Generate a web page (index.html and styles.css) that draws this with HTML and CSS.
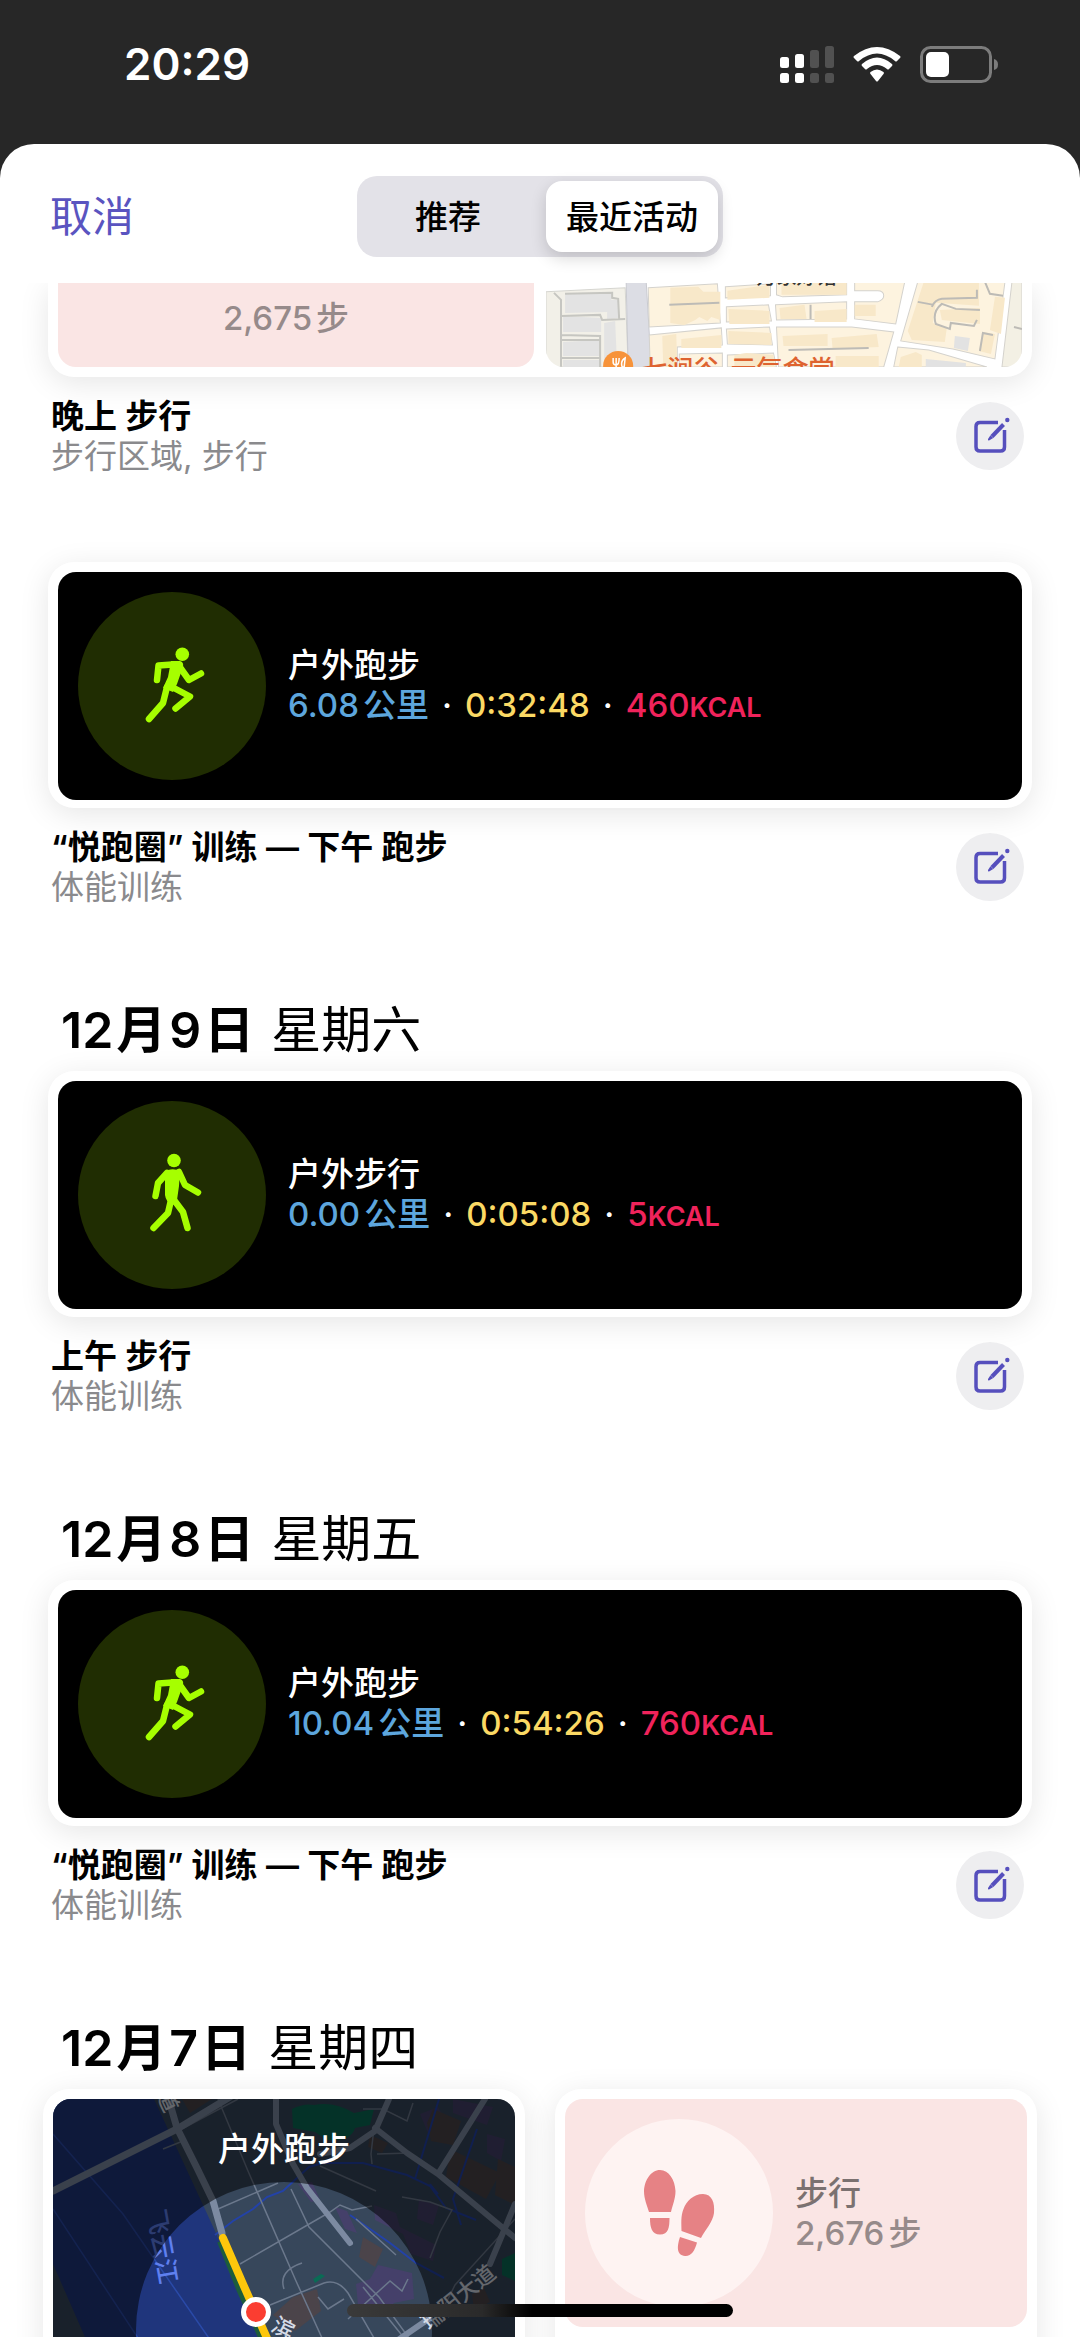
FILE: index.html
```html
<!DOCTYPE html>
<html lang="zh-CN">
<head>
    <meta charset="UTF-8">
    <meta name="viewport" content="width=device-width, initial-scale=1.0">
    <title>最近活动</title>
    <link rel="stylesheet" href="styles.css">
</head>
<body>
    <!-- Shared icons -->
    <svg class="sprite" aria-hidden="true">
        <symbol id="icon-run" viewBox="-3 6 90 120">
            <circle cx="52.3" cy="34.3" r="6.8" fill="#a6ff00"/>
            <path d="M41 41h9q4 1 3 6l-6 17-4 8-10-4 5-11z" fill="#a6ff00"/>
            <path d="M27 60l1.500-14.500 14-1M49 46l10 14 12-6.500M42 67l18 9.500-14.500 12M37 67l-4 16-14 16" fill="none" stroke="#a6ff00" stroke-width="6.500" stroke-linecap="round" stroke-linejoin="round"/>
        </symbol>
        <symbol id="icon-walk" viewBox="-3 6 90 120">
            <circle cx="44" cy="31.500" r="6.800" fill="#a6ff00"/>
            <path d="M38 41q6-2 12 1l-1 15-2 14q-2 4-6 3-5-1-6-8V45z" fill="#a6ff00"/>
            <path d="M37 44l-9 10-2.500 13M49 43l6 13 13 7.500M41 71l-3 13-14.500 15M44 71l9 12 4.500 16" fill="none" stroke="#a6ff00" stroke-width="6.500" stroke-linecap="round" stroke-linejoin="round"/>
        </symbol>
        <symbol id="icon-edit" viewBox="0 0 68 68">
            <path d="M42 20.500H24q-4 0-4 4v20.500q0 4 4 4h20.500q4 0 4-4V28" fill="none" stroke="#564fbd" stroke-width="3.500"/>
            <path d="M47.500 22.500L36 34.500" fill="none" stroke="#564fbd" stroke-width="4"/>
            <path d="M34.500 33.200l2.800 2.700-4.300 2.600q-1.500 0-1-1.500z" fill="#564fbd"/>
            <circle cx="51.300" cy="18" r="2.200" fill="#564fbd"/>
        </symbol>
    </svg>

    <header class="status-bar">
        <time class="clock">20:29</time>
        <div class="status-icons">
            <svg width="56" height="40" viewBox="0 0 56 40" aria-label="信号">
                <g fill="#fff">
                    <rect x="1" y="13" width="9" height="11" rx="2.500"/>
                    <rect x="16" y="10" width="9" height="14" rx="2.500"/>
                    <rect x="1" y="29" width="9" height="10" rx="2.500"/>
                    <rect x="16" y="29" width="9" height="10" rx="2.500"/>
                </g>
                <g fill="#515151">
                    <rect x="31" y="6" width="9" height="18" rx="2.500"/>
                    <rect x="46" y="2" width="9" height="22" rx="2.500"/>
                    <rect x="31" y="29" width="9" height="10" rx="2.500"/>
                    <rect x="46" y="29" width="9" height="10" rx="2.500"/>
                </g>
            </svg>
            <svg width="48" height="40" viewBox="0 0 48 40" aria-label="无线网络">
                <g fill="#fff">
                    <path d="M1 12Q24-6 47 12q1 1 0 2l-3 3q-1 1-2 0Q24 2 6 17q-1 1-2 0l-3-3q-1-1 0-2z"/>
                    <path d="M9 20q15-13 30 0 1 1 0 2l-3 3q-1 1-2 0-10-8-20 0-1 1-2 0l-3-3q-1-1 0-2z"/>
                    <path d="M17.500 28q6.500-5 13 0 1 1 0 2l-5.500 7q-1 1-2 0l-5.500-7q-1-1 0-2z"/>
                </g>
            </svg>
            <svg width="80" height="40" viewBox="0 0 80 40" aria-label="电池">
                <rect x="2.500" y="3.500" width="69" height="34" rx="9" fill="none" stroke="#7c7c7c" stroke-width="3"/>
                <rect x="7" y="8" width="23" height="25" rx="5" fill="#fff"/>
                <path d="M75 15q4 1 4 5.500T75 26z" fill="#7c7c7c"/>
            </svg>
        </div>
    </header>

    <main class="sheet">
        <div class="toolbar">
            <button class="cancel" type="button">取消</button>
            <fieldset class="segmented" aria-label="活动筛选">
                <input type="radio" name="tab" id="tab-recommended">
                <label for="tab-recommended">推荐</label>
                <input type="radio" name="tab" id="tab-recent" checked>
                <label for="tab-recent">最近活动</label>
            </fieldset>
        </div>

        <div class="feed">
            <article class="entry">
                <div class="card card-scrolled">
                    <div class="tile tile-pink tile-steps">
                        <p class="steps">2,675<span class="unit">步</span></p>
                    </div>
                    <div class="tile tile-map">
                        <svg class="map" viewBox="0 0 475 85" preserveAspectRatio="xMidYMax slice" aria-label="地图">
                            <rect width="475" height="85" fill="#fff"/>
                            <path d="M0 10l79-4 3 79H0z" fill="#f2f0e8" stroke="#d5d5d0"/>
                            <g fill="#e3e3e3">
                                <path d="M19 12l46-1v7h7l1 18-12 1V30l-42 1zM17 34l38 2v14H17zM17 60l37-2v16H17zM58 41l11-2 2 46H58zM17 78h38v7H17z"/>
                            </g>
                            <g fill="none" stroke="#c6c6c1" stroke-width="2">
                                <path d="M8 11l7 7v67M15 34l39-1 2 5 23-1M15 53l39 1v31M15 58h39M15 76h38M19 12l47-1v5l6 1 1 20"/>
                            </g>
                            <path d="M80 0h20l5 85H82z" fill="#dcdde4"/>
                            <path d="M80 0l2 85M100 0l5 85" stroke="#c9cad0"/>
                            <g fill="#fdf3df" stroke="#d4d2cd">
                                <path d="M102 6l69-4 3 39-71 4z"/>
                                <path d="M179 5l45-3v12l-45 2zM180 25l42-2 3 16-45 1zM180 47l43-2 3 18-45-1zM181 73l46-2 3 14h-49z"/>
                                <path d="M230 0h70v13l-64 2-6-2zM229 23l71-3v17l-70 1z"/>
                                <path d="M308 0h50l-9 42-41-5V20h23q6-2 6-6 0-5-6-5h-23z"/>
                                <path d="M103 53l72-7 1 17-45 2v20h-27zM133 72l43-1v14h-43z"/>
                                <path d="M230 45h75l42 5-10 35H232z"/>
                                <path d="M371 0h87l-10 77-42-10-52-8z"/>
                                <path d="M351 65l31 3 58 17h-93z"/>
                            </g>
                            <path d="M465 0h10v85h-20z" fill="#f3f0e4" stroke="#d4d2cd"/>
                            <g fill="#f8e8c9">
                                <path d="M124 6l28-1 5 5h17v28l-9-3-4 4-8-4-4 3-11 5-14-2z"/>
                                <path d="M181 9l42-6v13l-42 2zM182 27l41 2v13h-40zM182 49l43 2v12l-43-1zM200 71l27 2 1 12h-40v-12z"/>
                                <path d="M235 0h65v13h-65zM233 26l25-3 2 14h-26zM268 29l32-2v13h-32zM308 23h21v11h-21z"/>
                                <path d="M116 54l14-2 1 33h-14zM135 57l40-4v13h-40z"/>
                                <path d="M236 54l45-2v12h-44zM285 56l45-4 2 13-46 2zM289 74h43v11h-43z"/>
                                <path d="M377 0h55v24l-43-3-3 20 14 5-2 14-33-2-4-9zM393 28l40-2v16l-38-4zM448 15l10 1-4 36-11-4zM436 50l12 2-4 20-12-3zM354 75l15-5 6 3v12h-23z"/>
                            </g>
                            <path d="M123 23l50-2M242 68l80-2M264 23v14M371 20l16 3M385 25q3-7 10-8l35-1V8M433 28l-24-1-14-5q-10 8-6 20l14 5 1-6 23 3 3-6M438 0l5 12 13 2M433 69l3-18 10 2M467 45l8 2" fill="none" stroke="#bdbbb6" stroke-width="2"/>
                            <path d="M408 54l15 2-2 13-14-3zM379 77l40 4v4h-40z" fill="#e2e2e2"/>
                            <text class="map-street" x="210" y="2">万家好馆</text>
                            <circle cx="72" cy="84" r="15" fill="#f7933a"/>
                            <path d="M67 76v4q0 3 3 3v5M70 76v7M73 76q0 7-3 7M79 76q-5 3-3 9h2z" fill="none" stroke="#fff" stroke-width="1.500"/>
                            <text class="map-food" x="95" y="97">七涧谷</text>
                            <text class="map-food" x="184" y="97">元气食堂</text>
                        </svg>
                    </div>
                </div>
                <div class="meta">
                    <div class="meta-text">
                        <h3>晚上 步行</h3>
                        <p>步行区域, 步行</p>
                    </div>
                    <button class="edit" type="button" aria-label="编辑"><svg><use href="#icon-edit"/></svg></button>
                </div>
            </article>

            <article class="entry">
                <div class="card">
                    <div class="tile tile-workout">
                        <span class="badge"><svg><use href="#icon-run"/></svg></span>
                        <div class="tile-text">
                            <p>户外跑步</p>
                            <p class="stats"><span class="distance">6.08<span class="unit">公里</span></span><span>·</span><span class="duration">0:32:48</span><span>·</span><span class="energy">460<small>KCAL</small></span></p>
                        </div>
                    </div>
                </div>
                <div class="meta">
                    <div class="meta-text">
                        <h3>“悦跑圈” 训练 — 下午 跑步</h3>
                        <p>体能训练</p>
                    </div>
                    <button class="edit" type="button" aria-label="编辑"><svg><use href="#icon-edit"/></svg></button>
                </div>
            </article>

            <h2><b>12<span class="han">月</span>9<span class="han">日</span></b> 星期六</h2>
            <article class="entry">
                <div class="card">
                    <div class="tile tile-workout">
                        <span class="badge"><svg><use href="#icon-walk"/></svg></span>
                        <div class="tile-text">
                            <p>户外步行</p>
                            <p class="stats"><span class="distance">0.00<span class="unit">公里</span></span><span>·</span><span class="duration">0:05:08</span><span>·</span><span class="energy">5<small>KCAL</small></span></p>
                        </div>
                    </div>
                </div>
                <div class="meta">
                    <div class="meta-text">
                        <h3>上午 步行</h3>
                        <p>体能训练</p>
                    </div>
                    <button class="edit" type="button" aria-label="编辑"><svg><use href="#icon-edit"/></svg></button>
                </div>
            </article>

            <h2><b>12<span class="han">月</span>8<span class="han">日</span></b> 星期五</h2>
            <article class="entry">
                <div class="card">
                    <div class="tile tile-workout">
                        <span class="badge"><svg><use href="#icon-run"/></svg></span>
                        <div class="tile-text">
                            <p>户外跑步</p>
                            <p class="stats"><span class="distance">10.04<span class="unit">公里</span></span><span>·</span><span class="duration">0:54:26</span><span>·</span><span class="energy">760<small>KCAL</small></span></p>
                        </div>
                    </div>
                </div>
                <div class="meta">
                    <div class="meta-text">
                        <h3>“悦跑圈” 训练 — 下午 跑步</h3>
                        <p>体能训练</p>
                    </div>
                    <button class="edit" type="button" aria-label="编辑"><svg><use href="#icon-edit"/></svg></button>
                </div>
            </article>

            <h2><b>12<span class="han">月</span>7<span class="han">日</span></b> 星期四</h2>
            <div class="pair">
                <div class="card">
                    <div class="tile tile-route">
                        <svg class="map" viewBox="0 0 462 462" preserveAspectRatio="xMidYMin slice" aria-label="路线地图">
                            <rect width="462" height="462" fill="#37475b"/>
                            <path d="M0 0h101l61 132 43 107 90 223H130L0 165z" fill="#1f357c"/>
                            <path d="M0 35l70 80 90 130M0 110l85 129" fill="none" stroke="#2a4aa8" stroke-width="1.500"/>
                            <path d="M239 10q12-6 22-4 20-4 40 8l20-4-4 16-15 3q-4 14-28 12l-12-8-22-4z" fill="#0a6b55"/>
                            <path d="M260 180l8-5 4 2-10 7zM449 160l13-6v28l-13-6z" fill="#0a6b55"/>
                            <g fill="#45406a">
                                <path d="M245 85l14-2 8 18-9 2zM282 108l12 4 10 22-12-4zM321 106l22 8 4 14 36 18-3 16-22-7-8-20-28-14zM303 185l14-5 8-14 34 8 2 26-20 4-10 10-26-8zM367 15l18-7 10 18-20 8zM400 0l40 8-6 18-34-12zM366 100l20 6-6 20-16-6zM434 35l18 5-4 22-14-8z"/>
                            </g>
                            <g fill="#4b444a">
                                <path d="M380 10l28 12-8 24-22-4-4-18zM397 50l50 24-14 26-40-22zM445 60l17 8v38l-20-10zM317 36l18 8-6 10-14-6zM310 138l20 12-8 18-16-10zM240 198l24-8 4 22-26 20-22-16zM129 0h30l-22 14zM419 195l12-6 6 14-16 8z"/>
                            </g>
                            <path d="M162 136l18-14 20-12 14-12 16-6 26-24 14-4h40l44 12 23 11 16 22 30 12M297 116l40 28 26 20 28 15M424 30l-24 70 8 26M386 0l-24 80M377 85l8 10" fill="none" stroke="#2342a8" stroke-width="2"/>
                            <g fill="none" stroke="#6b788c" stroke-width="1.500">
                                <path d="M165 0l30 72 48 110 26 57M125 32l60-32M165 110l60-26M187 165l90-52 10-7 12 5 20-4M238 90l18 38 70 70 30 41M217 206l54-22q14-4 24 10l26 45M231 190q-6-18 18-26M265 198l10 12 16-10M321 29l-3 26 1 10M324 55l33-1M267 67l56 25M310 10h20l24 12 6-18M295 220l42-38 12 10 6-12M349 98l28 5 22 8-12 22-10 26M462 120l-60 66-10 20M303 120l40 36M110 50l20-8M360 250l-50-62"/>
                            </g>
                            <g fill="none" stroke="#7c8aa1" stroke-linecap="round" stroke-linejoin="round">
                                <path d="M0 92l124-62 53-32" stroke-width="7"/>
                                <path d="M117 5l7 24 20 40 16 33 9 32" stroke-width="7"/>
                                <path d="M223 0v25l17 40 14 24 43 55M336 0l-14 32-25 17-30 6" stroke-width="6"/>
                                <path d="M322 29l32 25 31 21 77 64M432 0l-47 75M462 105l-25 60M377 219l-32 22" stroke-width="6"/>
                            </g>
                            <text class="map-river" transform="translate(94 112) rotate(80)">飞云江</text>
                            <text class="map-road" transform="translate(376 232) rotate(-39)">瑞阳大道</text>
                            <text class="map-road" transform="translate(103 -5) rotate(65)">道</text>
                            <path d="M0 0h462v462H0zM231 83a148 148 0 1 0 0 296 148 148 0 1 0 0-296z" fill="#000" fill-opacity=".53" fill-rule="evenodd"/>
                            <text class="map-road map-road-bright" transform="translate(217 231) rotate(28)">滨</text>
                            <path d="M168 142l20 50 60 130" fill="none" stroke="#1c5c3c" stroke-width="8"/>
                            <path d="M170 139l20 46 31 70 30 70" fill="none" stroke="#fdc70c" stroke-width="8" stroke-linecap="round"/>
                            <circle cx="203" cy="213" r="12.500" fill="#fb3d31" stroke="#fff" stroke-width="5"/>
                        </svg>
                        <p class="route-title">户外跑步</p>
                    </div>
                </div>
                <div class="card">
                    <div class="tile tile-pink">
                        <span class="badge badge-steps">
                            <svg class="feet" viewBox="0 0 188 188" aria-hidden="true">
                                <g fill="#e68285">
                                    <path d="M75 51c9 0 15 10 15.500 21 0 8-3 14-4.500 21H64c-2-7-5-13-5-21 .5-11 7-21 16-21z"/>
                                    <path d="M65 99h19.500c0 9-1 16.500-9.500 16.500S65 108 65 99z"/>
                                    <path d="M118 75c9 0 12 9 11 19-1 9-9 17-13 25l-19.500-7c0-7-1-15 2-22 3-8 10-15 19.500-15z"/>
                                    <path d="M95 118l17 5.500c-2 8-6 14-12 13.500-9-1-8-10-5-19z"/>
                                </g>
                            </svg>
                        </span>
                        <div class="tile-text">
                            <p class="step-name">步行</p>
                            <p class="steps">2,676<span class="unit">步</span></p>
                        </div>
                    </div>
                </div>
            </div>
        </div>
    </main>
    <div class="home-indicator"></div>
</body>
</html>
```
FILE: styles.css
```css
/* Reset */
* {
    margin: 0;
    padding: 0;
    box-sizing: border-box;
}

:root {
    --accent: #5a54c0;
    --muted: #8a8a8d;
    --pink: #fae5e4;
}

body {
    display: flex;
    flex-direction: column;
    height: 100vh;
    overflow: hidden;
    background: #272727;
    color: #000;
    font-family: Inter, "Noto Sans CJK SC", sans-serif;
    font-size: 33px;
    line-height: 40px;
}

button {
    border: none;
    background: none;
    font: inherit;
    cursor: pointer;
}

.sprite {
    position: absolute;
    width: 0;
    height: 0;
}

/* Status bar */
.status-bar {
    display: flex;
    flex-shrink: 0;
    justify-content: space-between;
    align-items: center;
    height: 144px;
    padding: 0 81px 16px 124px;
    color: #fff;
}

.clock {
    font-size: 44px;
    font-weight: 600;
}

.status-icons {
    display: flex;
    align-items: center;
    gap: 18px;
}

/* Sheet */
.sheet {
    display: flex;
    flex-direction: column;
    flex: 1;
    min-height: 0;
    background: #fff;
    border-radius: 34px 34px 0 0;
    overflow: hidden;
}

.toolbar {
    display: grid;
    grid-template-columns: 1fr auto 1fr;
    align-items: center;
    flex-shrink: 0;
    padding: 32px 50px 26px;
}

.cancel {
    justify-self: start;
    color: var(--accent);
    font-size: 42px;
    line-height: 60px;
}

.segmented {
    display: grid;
    grid-template-columns: 1fr 1fr;
    gap: 12px;
    width: 366px;
    padding: 5px;
    border: none;
    border-radius: 20px;
    background: #e3e2e8;
}

.segmented input {
    position: absolute;
    opacity: 0;
}

.segmented label {
    display: flex;
    justify-content: center;
    align-items: center;
    height: 71px;
    border-radius: 16px;
    font-weight: 500;
    cursor: pointer;
}

.segmented input:checked + label {
    background: #fff;
    box-shadow: 0 6px 16px rgba(0, 0, 0, 0.16);
}

/* Feed */
.feed {
    flex: 1;
    min-height: 0;
    overflow: hidden;
}

.entry {
    margin: 0 48px 86px;
}

.entry:has(+ h2) {
    margin-bottom: 93px;
}

h2 {
    margin: 0 61px 11px;
    font-size: 50px;
    font-weight: 400;
    line-height: 60px;
}

h2 b {
    font-weight: 600;
}

h2 .han {
    margin: 0 3px;
}

.card {
    padding: 10px 10px 8px;
    border-radius: 26px;
    background: #fff;
    box-shadow: 0 6px 30px rgba(0, 0, 0, 0.1);
}

.card-scrolled {
    display: grid;
    grid-template-columns: 1fr 1fr;
    gap: 12px;
    padding: 0 10px 10px;
    border-radius: 0 0 26px 26px;
}

.tile {
    display: flex;
    align-items: center;
    gap: 22px;
    height: 228px;
    padding: 0 20px;
    border-radius: 18px;
    overflow: hidden;
    font-weight: 500;
}

.tile-workout {
    background: #000;
    color: #fff;
}

.tile-pink {
    background: var(--pink);
}

.card-scrolled .tile {
    height: 84px;
    border-radius: 0 0 18px 18px;
}

.tile-steps {
    justify-content: center;
    padding: 0 40px 14px 20px;
}

.tile-map {
    padding: 0;
}

.badge {
    display: flex;
    flex-shrink: 0;
    justify-content: center;
    align-items: center;
    width: 188px;
    height: 188px;
    border-radius: 50%;
    background: #202d02;
}

.badge svg {
    width: 90px;
    height: 120px;
}

.badge-steps {
    background: #fef3f2;
}

.badge .feet {
    width: 188px;
    height: 188px;
}

.unit {
    margin-left: 4px;
}

.stats {
    display: flex;
    gap: 13px;
    white-space: nowrap;
}

.stats small {
    font-size: 27px;
    font-weight: 600;
}

.distance {
    color: #5da6dd;
}

.duration {
    color: #fbd964;
}

.energy {
    color: #f0235b;
}

.steps {
    color: #968a8a;
}

.step-name {
    color: #7b7170;
}

.meta {
    display: flex;
    justify-content: space-between;
    align-items: center;
    margin-top: 19px;
    padding: 0 8px 0 3px;
}

h3 {
    font-size: 33px;
    font-weight: 600;
}

.meta-text p {
    color: var(--muted);
}

.edit {
    width: 68px;
    height: 68px;
    border-radius: 50%;
    background: #eeeef0;
}

.edit svg {
    display: block;
    width: 68px;
    height: 68px;
}

/* Half-width cards */
.pair {
    display: grid;
    grid-template-columns: 1fr 1fr;
    gap: 30px;
    padding: 0 43px;
}

.tile-route {
    position: relative;
    height: auto;
    padding: 0;
    color: #fff;
}

.map {
    display: block;
    width: 100%;
    height: 100%;
}

.route-title {
    position: absolute;
    top: 30px;
    left: 0;
    right: 0;
    text-align: center;
}

.map-street {
    font-size: 20px;
    fill: #333;
}

.map-food {
    font-size: 26px;
    font-weight: 500;
    fill: #de6330;
}

.map-river {
    font-size: 25px;
    fill: #5f80f0;
}

.map-road {
    font-size: 22px;
    fill: #d5dbe6;
}

.map-road-bright {
    font-weight: 500;
}

.home-indicator {
    position: fixed;
    left: 50%;
    bottom: 20px;
    width: 386px;
    height: 13px;
    margin-left: -193px;
    border-radius: 7px;
    background: linear-gradient(to right, #3a3a3a, #2a2a2a 35%, #000 48%);
}
```
